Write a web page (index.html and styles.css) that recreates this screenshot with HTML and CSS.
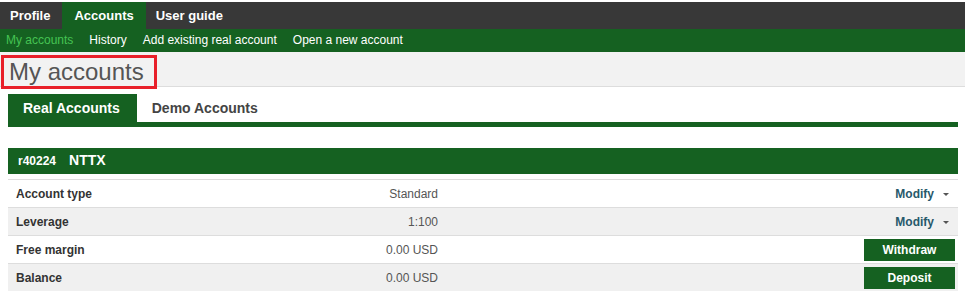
FILE: index.html
```html
<!DOCTYPE html>
<html lang="en">
<head>
  <meta charset="UTF-8">
  <title>My accounts</title>
  <link rel="stylesheet" href="styles.css">
</head>
<body>
  <nav class="main-nav">
    <a class="main-link" href="#">Profile</a>
    <a class="main-link active" href="#">Accounts</a>
    <a class="main-link" href="#">User guide</a>
  </nav>
  <nav class="sub-nav">
    <a class="sub-link active" href="#">My accounts</a>
    <a class="sub-link" href="#">History</a>
    <a class="sub-link" href="#">Add existing real account</a>
    <a class="sub-link" href="#">Open a new account</a>
  </nav>

  <header class="page-head">
    <h1 class="page-title">My accounts</h1>
    <span class="highlight"></span>
  </header>

  <main class="content">
    <div class="tabs">
      <a class="tab active" href="#">Real Accounts</a>
      <a class="tab" href="#">Demo Accounts</a>
    </div>

    <section class="account">
      <h2 class="account-head"><span class="acc-id">r40224</span> NTTX</h2>
      <div class="acc-table">
        <div class="acc-row">
          <b class="acc-label">Account type</b>
          <span class="acc-value">Standard</span>
          <span class="acc-action"><a class="modify" href="#">Modify</a><span class="caret"></span></span>
        </div>
        <div class="acc-row odd">
          <b class="acc-label">Leverage</b>
          <span class="acc-value">1:100</span>
          <span class="acc-action"><a class="modify" href="#">Modify</a><span class="caret"></span></span>
        </div>
        <div class="acc-row">
          <b class="acc-label">Free margin</b>
          <span class="acc-value">0.00 USD</span>
          <span class="acc-action"><button class="btn">Withdraw</button></span>
        </div>
        <div class="acc-row odd">
          <b class="acc-label">Balance</b>
          <span class="acc-value">0.00 USD</span>
          <span class="acc-action"><button class="btn">Deposit</button></span>
        </div>
      </div>
    </section>
  </main>
</body>
</html>
```

FILE: styles.css
```css
/* ---- General ---- */

:root {
  --green: #156121;
  --dark: #383838;
  --line: #dddddd;
}

body {
  margin: 0;
  padding-top: 2px;
  font-family: "Liberation Sans", Arial, sans-serif;
  font-size: 12px;
  color: #333;
  background: #fff;
}

a {
  text-decoration: none;
}

/* ---- Navigation ---- */

.main-nav {
  display: flex;
  height: 27px;
  background: var(--dark);
}

.main-link {
  padding: 0 11px 0 10px;
  margin-right: 1px;
  line-height: 27px;
  font-size: 13px;
  font-weight: bold;
  color: #fff;
}

.main-link.active {
  padding: 0 12px;
  margin-right: 0;
  background: var(--green);
}

.sub-nav {
  display: flex;
  gap: 16px;
  height: 23px;
  padding-left: 6px;
  background: var(--green);
}

.sub-link {
  line-height: 23px;
  color: #fff;
}

.sub-link.active {
  color: #45c353;
}

/* ---- Page header ---- */

.page-head {
  position: relative;
  height: 34px;
  background: #f2f2f2;
  border-bottom: 1px solid var(--line);
}

.page-title {
  margin: 0;
  padding-left: 9px;
  line-height: 40px;
  font-size: 24px;
  font-weight: normal;
  color: #555;
}

.highlight {
  position: absolute;
  left: 1px;
  top: 3px;
  width: 150px;
  height: 28px;
  border: 3px solid #e8202a;
}

/* ---- Tabs ---- */

.content {
  padding: 7px 7px 0 8px;
}

.tabs {
  display: flex;
  border-bottom: 5px solid var(--green);
}

.tab {
  padding: 0 15px;
  line-height: 28px;
  font-size: 14px;
  font-weight: bold;
  color: #444;
}

.tab.active {
  padding: 0 17px 0 15px;
  color: #fff;
  background: var(--green);
}

/* ---- Account ---- */

.account {
  margin-top: 21px;
}

.account-head {
  display: flex;
  gap: 13px;
  align-items: baseline;
  margin: 0 0 5px;
  padding-left: 10px;
  line-height: 25px;
  font-size: 14px;
  color: #fff;
  background: var(--green);
}

.acc-id {
  font-size: 12px;
}

.acc-row {
  display: grid;
  grid-template-columns: 200px 222px 1fr;
  align-items: center;
  height: 27px;
  padding: 0 3px 0 8px;
  border-top: 1px solid var(--line);
}

.acc-row.odd {
  background: #f0f0f0;
}

.acc-label {
  color: #333;
}

.acc-value {
  text-align: right;
  color: #555;
}

.acc-action {
  display: flex;
  justify-content: flex-end;
  align-items: center;
}

.modify {
  font-weight: bold;
  color: #27596b;
}

.caret {
  width: 0;
  height: 0;
  margin: 1px 6px 0 9px;
  border-left: 3px solid transparent;
  border-right: 3px solid transparent;
  border-top: 3px solid #555;
}

.btn {
  width: 91px;
  height: 22px;
  border: 0;
  padding: 0;
  font-family: inherit;
  font-size: 12px;
  font-weight: bold;
  color: #fff;
  background: var(--green);
  cursor: pointer;
}
```
